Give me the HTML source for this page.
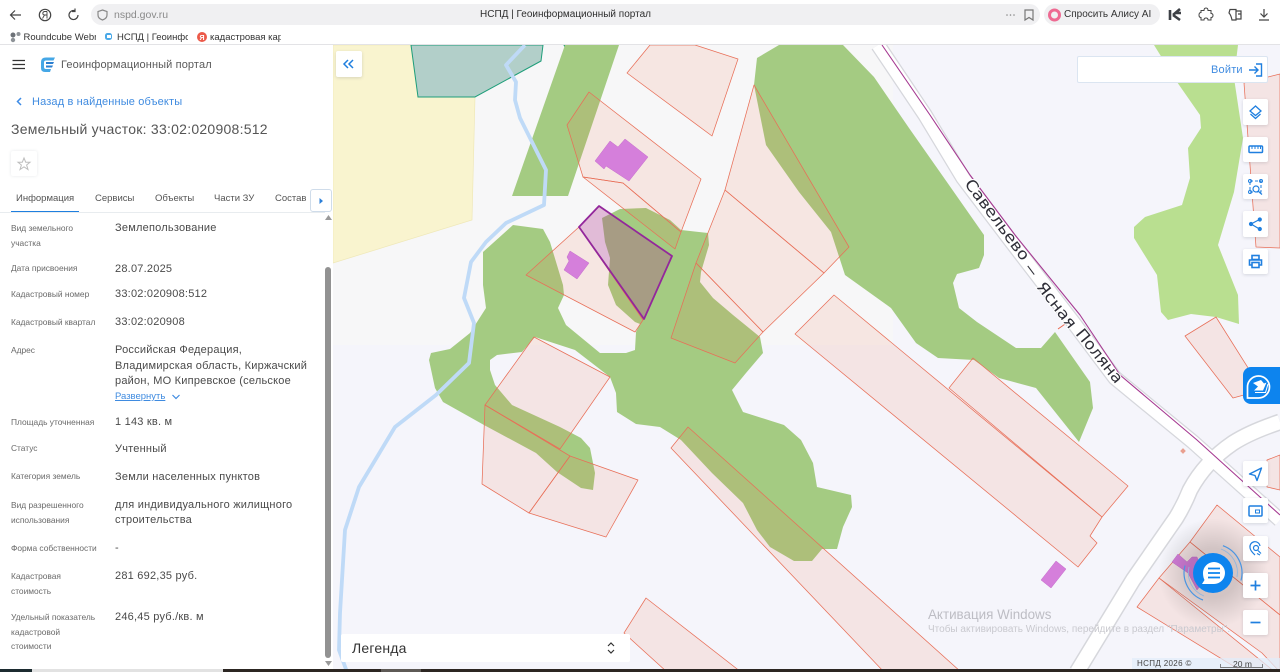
<!DOCTYPE html>
<html lang="ru"><head><meta charset="utf-8"><title>НСПД | Геоинформационный портал</title>
<style>
html,body{margin:0;padding:0;width:1280px;height:672px;overflow:hidden;background:#fff;font-family:"Liberation Sans","Noto Sans CJK SC",sans-serif}
.t{position:absolute;white-space:nowrap;line-height:14px}
.l{font-size:8.4px;color:#6a6a6a;left:11px}
.v{font-size:11px;color:#4a4a4a;left:115px;letter-spacing:.22px;margin-top:1px}
.tab{font-size:9.5px;color:#555;top:192px}
.b{position:absolute;background:#fff;border-radius:2px;box-shadow:0 1px 3px rgba(60,70,90,.18)}
.b svg,.a svg{position:absolute;left:0;top:0}
.a{position:absolute}
</style></head><body>

<svg class="a" style="left:0;top:0" width="1280" height="672" viewBox="0 0 1280 672">
<defs><radialGradient id="gl"><stop offset="45%" stop-color="#000" stop-opacity=".14"/><stop offset="100%" stop-color="#000" stop-opacity="0"/></radialGradient></defs>
<rect x="333" y="45" width="947" height="627" fill="#f5f5fb"/>
<rect x="333" y="45" width="560" height="300" fill="#f7f7f8"/>
<polygon points="333,45 411,45 418,97 475,97 472,220 333,263" fill="#f9f4cf" stroke="#efe8b8" stroke-width=".7"/>
<polygon points="411,45 418,97 475,97 541,61 543,45" fill="#b2cfc9" stroke="#1f9e7a" stroke-width="1"/>
<polygon points="564,45 568,53 596,51 602,45" fill="#85bd85" stroke="#1f9e7a" stroke-width="1"/>
<!-- green -->
<g fill="#a4cb82">
<polygon points="565,45 619,45 568,196 512,196"/>
<polygon points="513,225 543,229 550,242 563,285 564,295 558,308 566,325 600,353 626,353 635,350 636,332 640,324 635,322 616,305 608,285 610,258 605,242 602,218 620,209 646,208 670,220 681,230 708,233 709,245 701,272 700,282 713,298 733,315 760,337 763,353 746,373 732,390 743,412 784,425 801,440 813,463 817,487 851,495 852,507 843,527 837,549 822,549 812,561 794,561 770,547 757,530 743,503 712,473 681,440 660,427 636,424 617,412 616,393 610,377 575,350 535,337 522,352 497,355 490,360 490,370 495,385 512,405 560,427 581,438 590,448 595,473 593,490 581,488 557,472 536,453 484,425 443,402 435,388 429,360 431,353 450,349 470,333 486,308 483,285 483,252"/>
<polygon points="779,45 843,45 874,77 909,128 949,185 984,235 984,255 979,268 957,274 953,283 959,308 977,322 1016,348 1041,348 1055,332 1090,382 1093,408 1079,442 1036,388 999,378 974,360 938,358 916,343 891,308 845,275 831,232 799,192 766,145 754,85 757,58"/>
</g>
<polygon fill="#b9df90" points="1154,45 1238,45 1234,78 1243,138 1234,192 1218,245 1238,295 1239,324 1216,317 1191,314 1168,320 1161,312 1157,275 1134,238 1134,227 1145,217 1182,205 1190,178 1188,148 1201,128 1200,115 1177,82"/>
<!-- roads -->
<g fill="none" stroke-linejoin="round" stroke-linecap="butt">
<path d="M1280,422 Q1250,432 1233,443 Q1205,462 1190,490 Q1184,505 1176,518 L1133,580 L1077,672" stroke="#d6d7dc" stroke-width="17"/>
<path d="M878,45 L925,115 L963,178 L1010,240 L1073,322 L1115,378 L1193,442 L1280,520" stroke="#d6d7dc" stroke-width="15.5"/>
<path d="M1280,422 Q1250,432 1233,443 Q1205,462 1190,490 Q1184,505 1176,518 L1133,580 L1077,672" stroke="#fff" stroke-width="14"/>
<path d="M878,45 L925,115 L963,178 L1010,240 L1073,322 L1115,378 L1193,442 L1280,520" stroke="#fff" stroke-width="13"/>
<path d="M882,45 L930,115 L970,175 L1015,235 L1080,315 L1120,375 L1197,440 L1260,497 L1280,515" stroke="#a63a92" stroke-width="1.100"/>
<path d="M525,45 L506,65 L516,82 L515,100 L520,118 L546,170 L544,205 L506,223 L486,242 L471,262 L464,298 L474,323 L469,363 L436,395 L395,427 L359,487 L345,530 L340,613 L339,650 L347,672" stroke="#bfdaf7" stroke-width="3.800"/>
</g>
<!-- parcels -->
<g fill="rgba(240,110,70,.125)" stroke="#e86f58" stroke-width=".75" stroke-linejoin="round">
<polygon points="650,45 695,45 738,59 712,136 627,73"/>
<polygon points="589,92 701,179 681,232 623,183 583,177 567,125"/>
<polygon points="583,177 623,183 681,232 675,249"/>
<polygon points="579,227 526,275 635,332 643,320"/>
<polygon points="754,85 849,247 824,273 725,190"/>
<polygon points="725,190 824,273 763,332 696,263"/>
<polygon points="696,263 763,332 735,363 671,338"/>
<polygon points="534,337 610,377 560,449 485,405"/>
<polygon points="485,405 570,456 529,513 482,484"/>
<polygon points="570,456 638,480 606,537 529,513"/>
<polygon points="688,427 961,672 884,672 671,448"/>
<polygon points="646,598 741,672 667,672 624,633"/>
<polygon points="834,295 1102,517 1090,536 1097,543 1078,567 795,334"/>
<polygon points="973,358 1128,486 1102,517 949,388"/>
<polygon points="1216,317 1185,336 1233,398 1262,390"/>
<polygon points="1244,83 1280,74 1280,248 1256,247"/>
<polygon points="1217,505 1190,542 1280,615 1280,557"/>
<polygon points="1190,542 1159,578 1262,653 1280,672 1280,615"/>
<polygon points="1159,578 1137,607 1243,672 1275,672"/>
<polygon points="1267,460 1280,455 1280,490 1267,487"/>
</g>
<path d="M1058,329 L1068,322" stroke="#e9664e"/>
<rect x="1181" y="449" width="4" height="4" transform="rotate(45 1183 451)" fill="#e9a090"/>
<!-- houses -->
<g fill="#d57fdb" stroke="#c46dca" stroke-width=".5">
<polygon points="610,141 618,147 625,139 648,157 629,181 606,166 604,169 595,161"/>
<polygon points="570,251 589,263 577,279 564,270 569,261 567,257"/>
<polygon points="1056,561 1066,569 1051,588 1041,580"/>
<polygon points="1178,554 1172,562 1188,573 1197,590 1205,580 1197,557 1192,557 1187,562"/>
</g>
<polygon points="599,206 672,256 644,319 579,227" fill="rgba(175,50,140,.3)" stroke="#93279b" stroke-width="1.800" stroke-linejoin="round"/>
<!-- road label -->
<g font-family="'DejaVu Sans','Liberation Sans',sans-serif" font-size="15.5" fill="#2f2f38" stroke="#fff" stroke-width="2" paint-order="stroke">
<text transform="translate(964,184) rotate(53.2)" textLength="97" lengthAdjust="spacingAndGlyphs">Савельево</text>
<text transform="translate(1024,268) rotate(53.2)" textLength="12" lengthAdjust="spacingAndGlyphs">—</text>
<text transform="translate(1036,287) rotate(52)" textLength="54" lengthAdjust="spacingAndGlyphs">Ясная</text>
<text transform="translate(1075,334) rotate(51)" textLength="65" lengthAdjust="spacingAndGlyphs">Поляна</text>
</g>
<!-- chat glow -->
<circle cx="1213" cy="573" r="55" fill="url(#gl)"/>
</svg>

<!-- Windows watermark -->
<div class="t" style="left:928px;top:608px;font-size:13.4px;color:#bdbdc4">Активация Windows</div>
<div class="t" style="left:928px;top:623px;font-size:10px;color:#c9c9cf">Чтобы активировать Windows, перейдите в раздел "Параметры".</div>

<!-- browser chrome -->
<div class="a" style="left:0;top:0;width:1280px;height:45px;background:#fff;border-bottom:1px solid #e3e3e6;box-sizing:border-box"></div>
<div class="a" style="left:91px;top:4px;width:949px;height:21px;border-radius:11px;background:#f0f0f2"></div>
<div class="a" style="left:1044px;top:4px;width:116px;height:21px;border-radius:11px;background:#f0f0f2"></div>
<svg class="a" style="left:0;top:0" width="1280" height="45" fill="none" stroke="#444" stroke-width="1.200">
<path d="M21,15H11M15,10.500L10.500,15L15,19.500"/>
<circle cx="45" cy="15" r="5.700"/><path d="M47,11.500V18.500M47,11.500H44.500Q42.800,11.800 42.800,13.400Q42.800,15 44.500,15H47M44.500,15L42.500,18.500" stroke-width=".9"/>
<path d="M78,15A4.500,4.500 0 1 1 75,10.800M75,8.500V11.500H72" />
<path d="M102.500,10L107,11.500V15Q107,18.500 102.500,20Q98,18.500 98,15V11.500Z" stroke="#888"/>
<circle cx="1007" cy="15" r=".8" fill="#888" stroke="none"/><circle cx="1010.500" cy="15" r=".8" fill="#888" stroke="none"/><circle cx="1014" cy="15" r=".8" fill="#888" stroke="none"/>
<path d="M1025,10H1033V20L1029,17.500L1025,20Z" stroke="#777"/>
<circle cx="1054.500" cy="15" r="5" stroke="#ee6a92" stroke-width="3"/>
<path d="M1170,10V20M1173,15L1180,9M1173,15L1180,20M1176,13L1181,13" stroke="#3d4046" stroke-width="2.600"/>
<path d="M1201,11H1204Q1204,8.500 1206,8.500Q1208,8.500 1208,11H1211V14Q1213,14 1213,16Q1213,18 1211,18V20.500H1208Q1208,18.500 1206,18.500Q1204,18.500 1204,20.500H1201V18Q1199,18 1199,15.500Q1199,13 1201,13Z" stroke-width="1" transform="translate(0,-.5)"/>
<path d="M1230,9.500H1236L1236,20H1232Q1231,15 1229,13ZM1236,11H1241V19H1236M1238,14H1241"/>
<path d="M1264,9V17M1260.500,13.500L1264,17L1267.500,13.500M1259,20H1269"/>
<!-- bookmarks -->
<g stroke="none"><circle cx="13" cy="35" r="2.500" fill="#6d7278"/><circle cx="18.500" cy="34" r="2" fill="#8e9398"/><circle cx="13" cy="40" r="2.200" fill="#8e9398"/></g>
<g><rect x="105" y="33" width="7" height="7" rx="2.500" fill="#4aa9e8" stroke="none"/><rect x="107" y="35" width="4" height="3" fill="#fff" stroke="none"/></g>
<circle cx="202" cy="37" r="5" fill="#ec5a4a" stroke="none"/>
</svg>
<div class="t" style="left:114px;top:8px;font-size:10.500px;color:#8a8a8a">nspd.gov.ru</div>
<div class="t" style="left:480px;top:8px;font-size:10px;color:#2e2e2e">НСПД | Геоинформационный портал</div>
<div class="t" style="left:1064px;top:8px;font-size:10px;color:#333">Спросить Алису AI</div>
<div class="t" style="left:23.500px;top:31px;font-size:9.500px;color:#333;width:72px;overflow:hidden">Roundcube Webm</div>
<div class="t" style="left:117px;top:31px;font-size:9.500px;color:#333;width:71px;overflow:hidden">НСПД | Геоинформ</div>
<div class="t" style="left:199.500px;top:32px;font-size:7px;color:#fff;font-weight:bold">Я</div>
<div class="t" style="left:210px;top:31px;font-size:9.500px;color:#333;width:71px;overflow:hidden">кадастровая карт</div>

<!-- left panel -->
<div class="a" style="left:0;top:45px;width:333px;height:627px;background:#fff"></div>
<svg class="a" style="left:0;top:45px" width="333" height="627" fill="none">
<path d="M12.500,15.500H25M12.500,19.500H25M12.500,23.500H25" stroke="#333" stroke-width="1.300"/>
<path d="M46,12.500H55L53.500,15.500H46Q44,15.500 44,17.500V22Q44,24 46,24H51L50,27H45Q41,27 41,23V17Q41,12.500 46,12.500Z" fill="#45a7e6"/>
<path d="M46,17H54L53,19H46ZM46,20.500H53L52,22.500H46Z" fill="#2b7fd0"/>
<path d="M21,53L17.500,56.500L21,60" stroke="#3d8be6" stroke-width="1.500"/>
</svg>
<div class="t" style="left:61px;top:58px;font-size:11px;color:#5a5a5a;letter-spacing:.12px">Геоинформационный портал</div>
<div class="t" style="left:32px;top:95px;font-size:11px;color:#3f8be0;letter-spacing:.15px">Назад в найденные объекты</div>
<div class="t" style="left:11px;top:122px;font-size:14px;color:#555;letter-spacing:.25px">Земельный участок: 33:02:020908:512</div>
<div class="a" style="left:11px;top:151px;width:26px;height:25px;background:#fff;box-shadow:0 0 3px rgba(60,70,90,.12);border-radius:2px"></div>
<svg class="a" style="left:11px;top:151px" width="26" height="25"><path d="M13,7L14.700,11.200H19L15.600,14L17,18.500L13,15.800L9,18.500L10.400,14L7,11.200H11.300Z" fill="none" stroke="#bdbdbd" stroke-width="1"/></svg>

<div class="t tab" style="left:16px">Информация</div>
<div class="t tab" style="left:95px">Сервисы</div>
<div class="t tab" style="left:155px">Объекты</div>
<div class="t tab" style="left:214px">Части ЗУ</div>
<div class="t tab" style="left:275px;width:33px;overflow:hidden">Состав</div>
<div class="a" style="left:11px;top:210.500px;width:68px;height:2px;background:#1f7fdf"></div>
<div class="a" style="left:0;top:212px;width:325px;height:1px;background:#e8ecef"></div>
<div class="a" style="left:310px;top:189px;width:20px;height:21px;background:#fff;border:1px solid #cfdcea;border-radius:3px"></div>
<svg class="a" style="left:310px;top:189px" width="22" height="23"><path d="M9.500,9V15L13,12Z" fill="#2b7fd8"/></svg>

<div class="t l" style="top:221px">Вид земельного</div>
<div class="t l" style="top:236px">участка</div>
<div class="t l" style="top:261px">Дата присвоения</div>
<div class="t l" style="top:287px">Кадастровый номер</div>
<div class="t l" style="top:315px">Кадастровый квартал</div>
<div class="t l" style="top:343px">Адрес</div>
<div class="t l" style="top:415px">Площадь уточненная</div>
<div class="t l" style="top:441px">Статус</div>
<div class="t l" style="top:469px">Категория земель</div>
<div class="t l" style="top:498px">Вид разрешенного</div>
<div class="t l" style="top:513px">использования</div>
<div class="t l" style="top:541px">Форма собственности</div>
<div class="t l" style="top:569px">Кадастровая</div>
<div class="t l" style="top:584px">стоимость</div>
<div class="t l" style="top:610px">Удельный показатель</div>
<div class="t l" style="top:625px">кадастровой</div>
<div class="t l" style="top:639px">стоимости</div>

<div class="t v" style="top:220px">Землепользование</div>
<div class="t v" style="top:261px">28.07.2025</div>
<div class="t v" style="top:286px">33:02:020908:512</div>
<div class="t v" style="top:314px">33:02:020908</div>
<div class="t v" style="top:342px">Российская Федерация,</div>
<div class="t v" style="top:358px">Владимирская область, Киржачский</div>
<div class="t v" style="top:373px">район, МО Кипревское (сельское</div>
<div class="t" style="left:115px;top:390px;font-size:9.500px;color:#3f8be0;text-decoration:underline">Развернуть</div>
<svg class="a" style="left:170px;top:392px" width="12" height="10"><path d="M2.500,3L6,6.500L9.500,3" fill="none" stroke="#3f8be0" stroke-width="1.200"/></svg>
<div class="t v" style="top:414px">1 143 кв. м</div>
<div class="t v" style="top:441px">Учтенный</div>
<div class="t v" style="top:469px">Земли населенных пунктов</div>
<div class="t v" style="top:497px">для индивидуального жилищного</div>
<div class="t v" style="top:512px">строительства</div>
<div class="t v" style="top:540px">-</div>
<div class="t v" style="top:568px">281 692,35 руб.</div>
<div class="t v" style="top:609px">246,45 руб./кв. м</div>

<div class="a" style="left:325px;top:267px;width:6px;height:391px;background:#929292;border-radius:3px"></div>
<svg class="a" style="left:325px;top:214px" width="7" height="8"><path d="M0,6H7L3.500,1Z" fill="#9a9a9a"/></svg>
<svg class="a" style="left:325px;top:660px" width="7" height="8"><path d="M0,1H7L3.500,6Z" fill="#9a9a9a"/></svg>

<!-- map controls -->
<div class="b" style="left:336px;top:51px;width:26px;height:26px"><svg width="26" height="26" fill="none" stroke="#1f7fdf" stroke-width="1.500"><path d="M12,9L8,13L12,17M17,9L13,13L17,17"/></svg></div>
<div class="a" style="left:1077px;top:56px;width:191px;height:27px;background:#fff;border:1px solid #dbe5f1;border-radius:2px;box-sizing:border-box"></div>
<div class="t" style="left:1211px;top:63px;font-size:11px;color:#3f8be0;letter-spacing:.2px">Войти</div>
<svg class="a" style="left:1248px;top:62px" width="16" height="16" fill="none" stroke="#1f7fdf" stroke-width="1.400"><path d="M1,8H10M6.500,4.500L10,8L6.500,11.500M8,2H13.500V14H8"/></svg>

<div class="a" style="left:341px;top:634px;width:289px;height:28px;background:#fff;border-radius:2px"></div>
<div class="t" style="left:352px;top:641px;font-size:14px;color:#333;letter-spacing:.2px">Легенда</div>
<svg class="a" style="left:605px;top:641px" width="12" height="14" fill="none" stroke="#333" stroke-width="1.200"><path d="M3,5L6,2L9,5M3,9L6,12L9,9"/></svg>

<div class="b" style="left:1243px;top:99px;width:25px;height:26px"><svg width="25" height="26" fill="none" stroke="#1f7fdf" stroke-width="1.300"><path d="M12.500,7L18,12L12.500,16.500L7,12Z"/><path d="M7.500,15L12.500,19.500L17.500,15"/></svg></div>
<div class="b" style="left:1243px;top:137px;width:25px;height:25px"><svg width="25" height="25" fill="none" stroke="#1f7fdf" stroke-width="1.500"><rect x="6" y="9" width="13.500" height="6.500" rx="1"/><path d="M9,9V12M12,9V12M15,9V12M17.500,9V12" stroke-width="1"/></svg></div>
<div class="b" style="left:1243px;top:174px;width:25px;height:25px"><svg width="25" height="25" fill="none" stroke="#1f7fdf" stroke-width="1"><rect x="7" y="7" width="11" height="11" stroke-dasharray="3 2"/><circle cx="7" cy="7" r="1.500"/><circle cx="18" cy="7" r="1.500"/><circle cx="7" cy="18" r="1.500"/><circle cx="13" cy="15" r="3" stroke-width="1.200"/><path d="M15,17L19,20.500" stroke-width="1.200"/></svg></div>
<div class="b" style="left:1243px;top:211px;width:25px;height:26px"><svg width="25" height="26" fill="#1f7fdf" stroke="#1f7fdf" stroke-width="1.200"><path d="M16.500,8.500L8,13L16.500,18" fill="none"/><circle cx="16.800" cy="8.500" r="1.500"/><circle cx="8" cy="13" r="1.500"/><circle cx="16.800" cy="18" r="1.500"/></svg></div>
<div class="b" style="left:1243px;top:249px;width:25px;height:25px"><svg width="25" height="25" fill="none" stroke="#1f7fdf" stroke-width="1.600"><rect x="9" y="6.500" width="7" height="4"/><path d="M9,16H6.500V11H18.500V16H16"/><rect x="9" y="13.500" width="7" height="5"/></svg></div>

<div class="a" style="left:1243px;top:367px;width:37px;height:37px;background:#0d84ee;border-radius:8px 0 0 8px"></div>
<svg class="a" style="left:1243px;top:367px" width="37" height="37" fill="none" stroke="#fff"><path d="M4.500,20A11,11 0 1 1 15.500,31H4.500Z" stroke-width="1.700"/><path d="M10,16L18,13L21,16.500L23.500,15.500L20,23.500H11L15,19.500Z" fill="#fff" stroke="none"/><path d="M25,17L22.500,25.500H12" stroke-width="1"/></svg>

<div class="b" style="left:1243px;top:461px;width:25px;height:25px"><svg width="25" height="25"><path d="M18.500,7L6.500,13L12,14.500L14,19.500Z" fill="none" stroke="#1f7fdf" stroke-width="1.400" stroke-linejoin="round"/></svg></div>
<div class="b" style="left:1243px;top:498px;width:25px;height:25px"><svg width="25" height="25" fill="none" stroke="#1f7fdf" stroke-width="1.500"><rect x="6" y="8" width="13" height="10" rx="1"/><rect x="12.500" y="12" width="4" height="3" stroke-width="1"/></svg></div>
<div class="b" style="left:1243px;top:536px;width:25px;height:25px"><svg width="25" height="25" fill="none" stroke="#1f7fdf" stroke-width="1.200"><path d="M12,19Q7,14.500 7,11.500A5,5 0 0 1 17,10"/><circle cx="13" cy="12" r="2.500"/><path d="M15,14.500L18,17.500M14,17.500L17,19"/></svg></div>
<div class="b" style="left:1243px;top:573px;width:25px;height:25px"><svg width="25" height="25" stroke="#1f7fdf" stroke-width="1.700"><path d="M7.500,12.500H17.500M12.500,7.500V17.500"/></svg></div>
<div class="b" style="left:1243px;top:610px;width:25px;height:25px"><svg width="25" height="25" stroke="#1f7fdf" stroke-width="1.700"><path d="M7.500,12.500H17.500"/></svg></div>

<!-- chat -->
<svg class="a" style="left:1173px;top:533px" width="80" height="80" fill="none">
<path d="M49.900,12.700A29,29 0 0 1 68,47.500" stroke="#4a95e2" stroke-width="1.200"/>
<path d="M48,16A25,25 0 0 1 64,44" stroke="#8db6e0" stroke-width=".8"/>
<path d="M12,32.500A29,29 0 0 0 30,67" stroke="#4a95e2" stroke-width="1.200"/>
<path d="M16,34A25,25 0 0 0 31,63" stroke="#8db6e0" stroke-width=".8"/>
<circle cx="40" cy="40" r="20" fill="#0d84ee"/>
<path d="M30,40A11,11 0 1 1 41,51H29L31.500,47Q30,44 30,40Z" fill="#fff"/>
<path d="M35,35.500H47M35,40H47M35,44.500H47" stroke="#0d84ee" stroke-width="1.800"/>
</svg>

<!-- attribution -->
<div class="a" style="left:1132px;top:658px;width:148px;height:11px;background:rgba(225,236,250,.75)"></div>
<div class="t" style="left:1137px;top:657px;font-size:8px;color:#444;letter-spacing:.35px">НСПД 2026 ©</div>
<div class="t" style="left:1233px;top:657px;font-size:8.500px;color:#444">20 m</div>
<svg class="a" style="left:1220px;top:662px" width="44" height="7"><path d="M.5,2V5.500H42.500V2" fill="none" stroke="#555" stroke-width=".7"/></svg>

<!-- taskbar edge -->
<div class="a" style="left:0;top:669px;width:1280px;height:3px;background:#2c2622"></div>
<div class="a" style="left:0;top:669px;width:32px;height:3px;background:#1c2b30"></div>
<div class="a" style="left:32px;top:669px;width:191px;height:3px;background:#e2e2e2"></div>
<div class="a" style="left:381px;top:669px;width:40px;height:3px;background:#5e5a56"></div>
</body></html>
